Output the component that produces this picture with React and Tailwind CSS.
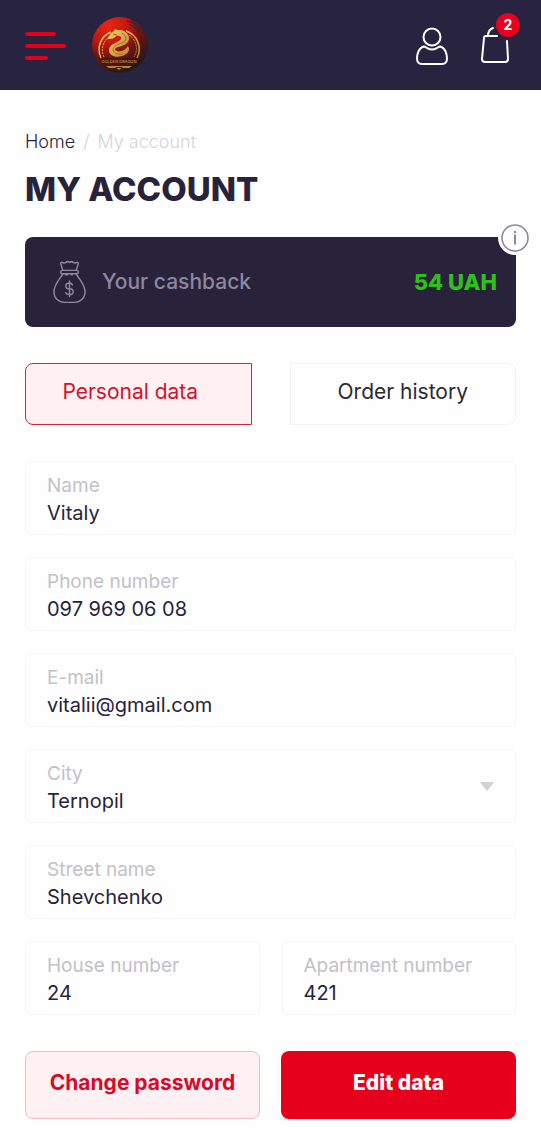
import { useState } from 'react';
import clsx from 'clsx';

const initialData = {
    name: 'Vitaly',
    phone: '097 969 06 08',
    email: 'vitalii@gmail.com',
    city: 'Ternopil',
    street: 'Shevchenko',
    house: '24',
    apartment: '421',
};

const cities = ['Ternopil', 'Lviv', 'Kyiv'];

const fieldBox = 'block rounded-md border border-[#f6f4f8] bg-[#fefefe] px-[21px] pt-3 pb-1.5';
const fieldLabel = 'block text-[19px] leading-6 text-[#c3c1c8]';
const fieldValue = 'block w-full appearance-none bg-transparent text-xl leading-[30px] text-[#28233b] outline-none';

function Logo() {
    return (
        <svg width="58" height="58" viewBox="0 0 58 58" role="img" aria-label="Golden Dragon">
            <defs>
                <radialGradient id="disc" cx="0.3" cy="0.15" r="0.9">
                    <stop offset="0" stopColor="#e8260f" />
                    <stop offset="0.35" stopColor="#c41a10" />
                    <stop offset="0.65" stopColor="#6a1413" />
                    <stop offset="1" stopColor="#1c1a1c" />
                </radialGradient>
                <linearGradient id="gold" x1="0" y1="0" x2="1" y2="1">
                    <stop offset="0" stopColor="#f0cf6c" />
                    <stop offset="1" stopColor="#c08530" />
                </linearGradient>
            </defs>
            <circle cx="29" cy="29" r="28" fill="url(#disc)" />
            <path d="M36 5q8 1 13 11M38 8q6 2 9 8M40 4q7 4 10 10" fill="none" stroke="#28233f" strokeWidth="1" />
            <path d="M10 42a19 19 0 0 1 10-26M35 15a19 19 0 0 1 11 27" fill="none" stroke="url(#gold)" strokeWidth="1.5" />
            <path d="M13 41a16 16 0 0 1 5-20M38 19a16 16 0 0 1 5 22" fill="none" stroke="url(#gold)" strokeWidth="1" strokeDasharray="2 1" />
            <path
                d="M18 20c2-4 5-4 6-7 3 2 6 0 9 2 5 3 7 8 3 12-4 4-10 3-12 6 0 3 6 3 9 1 2-1 3-3 4-4 3 4-1 9-6 10-6 2-13 0-13-6 0-7 10-7 12-11 1-3-3-4-5-3-2 3-5 3-9 3z"
                fill="url(#gold)"
            />
            <path d="M22 18l4 1M31 17c5 3 5 8 0 10-4 1-9 3-9 7 1 4 6 5 10 4" fill="none" stroke="#a46a20" strokeWidth="1" />
            <rect x="10" y="42" width="38" height="6" fill="#351515" fillOpacity="0.6" />
            <text x="28" y="47" textAnchor="middle" fontSize="4" fill="#e0ae50">GOLDEN DRAGON</text>
            <path d="M15 50h26l-3 2H18zM24 51l4 3 4-3" fill="#b98431" />
        </svg>
    );
}

function Header() {
    return (
        <header className="flex h-[90px] items-center bg-[#28233f] pr-[21px] pl-[25px]">
            <button type="button" aria-label="Menu" className="mr-[25px]">
                <svg width="41" height="30" viewBox="0 0 41 30" fill="none" stroke="#e2001f" strokeWidth="4" strokeLinecap="round">
                    <path d="M2 4h27M2 16h37M2 28h19" />
                </svg>
            </button>
            <a href="#home">
                <Logo />
            </a>
            <div className="ml-auto flex items-center gap-[30px]">
                <a href="#account" aria-label="My account">
                    <svg width="32" height="42" viewBox="0 0 32 42" fill="none" stroke="#fff" strokeWidth="2">
                        <circle cx="16" cy="13" r="8.5" />
                        <path d="M8 22.5c2 0 3 3 8 3s6-3 8-3c5 1 7 7 7 12 0 4-2 5.500-5 5.500H6c-3 0-5-1.500-5-5.500 0-5 2-11 7-12z" strokeLinejoin="round" />
                    </svg>
                </a>
                <a href="#cart" aria-label="Cart, 2 items" className="relative block">
                    <svg width="42" height="42" viewBox="0 0 42 42" fill="none" stroke="#fff" strokeWidth="2" strokeLinecap="round">
                        <path d="M19 12H8q-2 0-2 2L4 35q0 3 3 3h20q3 0 3-3L29 17M10 12c0-4 2-7 5-8" />
                    </svg>
                    <span className="absolute -top-[11px] right-0 flex h-6 w-6 items-center justify-center rounded-full bg-[#e8001f] text-sm font-bold text-white">
                        2
                    </span>
                </a>
            </div>
        </header>
    );
}

function MoneyBagIcon() {
    return (
        <svg width="33" height="44" viewBox="0 0 34 44" fill="none" stroke="#8d879f" strokeWidth="1.5" strokeLinecap="round" strokeLinejoin="round">
            <path d="M10 10L8 3q0-2 2-1 2 1 3 0 2-2 4 0 2-2 4 0 1 1 3 0 2-1 2 1l-2 7" />
            <rect x="8" y="10" width="18" height="3.5" rx="1.5" />
            <path d="M10 14C6 20 1 25 1 32c0 7 5 11 11 11h10c6 0 11-4 11-11 0-7-5-12-9-18M13 14.500h2M19 14.500h1" />
            <path d="M20 25q-1-2-3-2c-5 0-5 6 0 6s5 6 0 6q-3 0-4-2M17 21v16" />
        </svg>
    );
}

function Field({ label, value, onChange, type = 'text' }) {
    return (
        <label className={fieldBox}>
            <span className={fieldLabel}>{label}</span>
            <input type={type} value={value} onChange={(e) => onChange(e.target.value)} className={fieldValue} />
        </label>
    );
}

export default function App() {
    const [data, setData] = useState(initialData);
    const [tab, setTab] = useState('personal');

    const update = (key) => (value) => setData({ ...data, [key]: value });

    return (
        <div className="bg-[#fefefe] font-['Inter',sans-serif]">
            <Header />

            <main className="px-[25px] pt-10 pb-3">
                <nav aria-label="Breadcrumb" className="flex gap-2 text-lg leading-6 font-light">
                    <a href="#home" className="text-[#28233b]">Home</a>
                    <span className="text-[#d5d3da]">/</span>
                    <span className="text-[#d5d3da]">My account</span>
                </nav>
                <h1 className="mt-3 text-[33px] leading-[46px] font-extrabold text-[#28233b] uppercase">My account</h1>

                <section className="relative mt-[25px] flex h-[90px] items-center rounded-lg bg-[#28233b] pr-[19px] pl-7">
                    <MoneyBagIcon />
                    <span className="ml-4 text-[21px] font-medium text-[#8d879f]">Your cashback</span>
                    <span className="ml-auto text-[22px] font-extrabold text-[#2fc01a]">54 UAH</span>
                    <button type="button" aria-label="Cashback info" className="absolute -top-4 -right-4 rounded-full bg-[#fefefe] p-[3px]">
                        <svg width="28" height="28" viewBox="0 0 28 28" fill="none" stroke="#8d879f">
                            <circle cx="14" cy="14" r="13" strokeWidth="1.6" />
                            <path d="M14 10.500v10M14 7v2" strokeWidth="2" />
                        </svg>
                    </button>
                </section>

                <div role="tablist" className="mt-9 grid grid-cols-2 gap-[38px] text-[21px]">
                    <button
                        type="button"
                        role="tab"
                        aria-selected={tab === 'personal'}
                        onClick={() => setTab('personal')}
                        className={clsx(
                            'h-[62px] rounded-l-lg border pr-4 pb-1',
                            tab === 'personal' ? 'border-[#d6243e] bg-[#fff0f2] text-[#d31130]' : 'border-[#f4f1f7] text-[#28233b]'
                        )}
                    >
                        Personal data
                    </button>
                    <button
                        type="button"
                        role="tab"
                        aria-selected={tab === 'orders'}
                        onClick={() => setTab('orders')}
                        className={clsx(
                            'h-[62px] rounded-r-lg border pb-1',
                            tab === 'orders' ? 'border-[#d6243e] bg-[#fff0f2] text-[#d31130]' : 'border-[#f4f1f7] text-[#2a2930]'
                        )}
                    >
                        Order history
                    </button>
                </div>

                <form onSubmit={(e) => e.preventDefault()}>
                    <div className="mt-9 flex flex-col gap-[22px]">
                        <Field label="Name" value={data.name} onChange={update('name')} />
                        <Field label="Phone number" type="tel" value={data.phone} onChange={update('phone')} />
                        <Field label="E-mail" type="email" value={data.email} onChange={update('email')} />
                        <label className={clsx(fieldBox, 'relative')}>
                            <span className={fieldLabel}>City</span>
                            <select value={data.city} onChange={(e) => update('city')(e.target.value)} className={fieldValue}>
                                {cities.map((city) => (
                                    <option key={city}>{city}</option>
                                ))}
                            </select>
                            <svg width="14" height="9" viewBox="0 0 14 9" className="pointer-events-none absolute top-8 right-[21px]">
                                <path d="M1 0h12q1 0 .5 1L8 8q-1 1-2 0L.5 1Q0 0 1 0z" fill="#d3d3d6" />
                            </svg>
                        </label>
                        <Field label="Street name" value={data.street} onChange={update('street')} />
                        <div className="grid grid-cols-2 gap-[22px]">
                            <Field label="House number" value={data.house} onChange={update('house')} />
                            <Field label="Apartment number" value={data.apartment} onChange={update('apartment')} />
                        </div>
                    </div>

                    <div className="mt-9 grid grid-cols-2 gap-[21px] text-[21px]">
                        <button type="button" className="h-[68px] rounded-lg border border-[#f7b9c4] bg-[#fff1f2] pb-1 font-bold text-[#d8092b]">
                            Change password
                        </button>
                        <button type="submit" className="h-[68px] rounded-lg bg-[#e6001c] pb-1 font-extrabold text-white">
                            Edit data
                        </button>
                    </div>
                </form>
            </main>
        </div>
    );
}
